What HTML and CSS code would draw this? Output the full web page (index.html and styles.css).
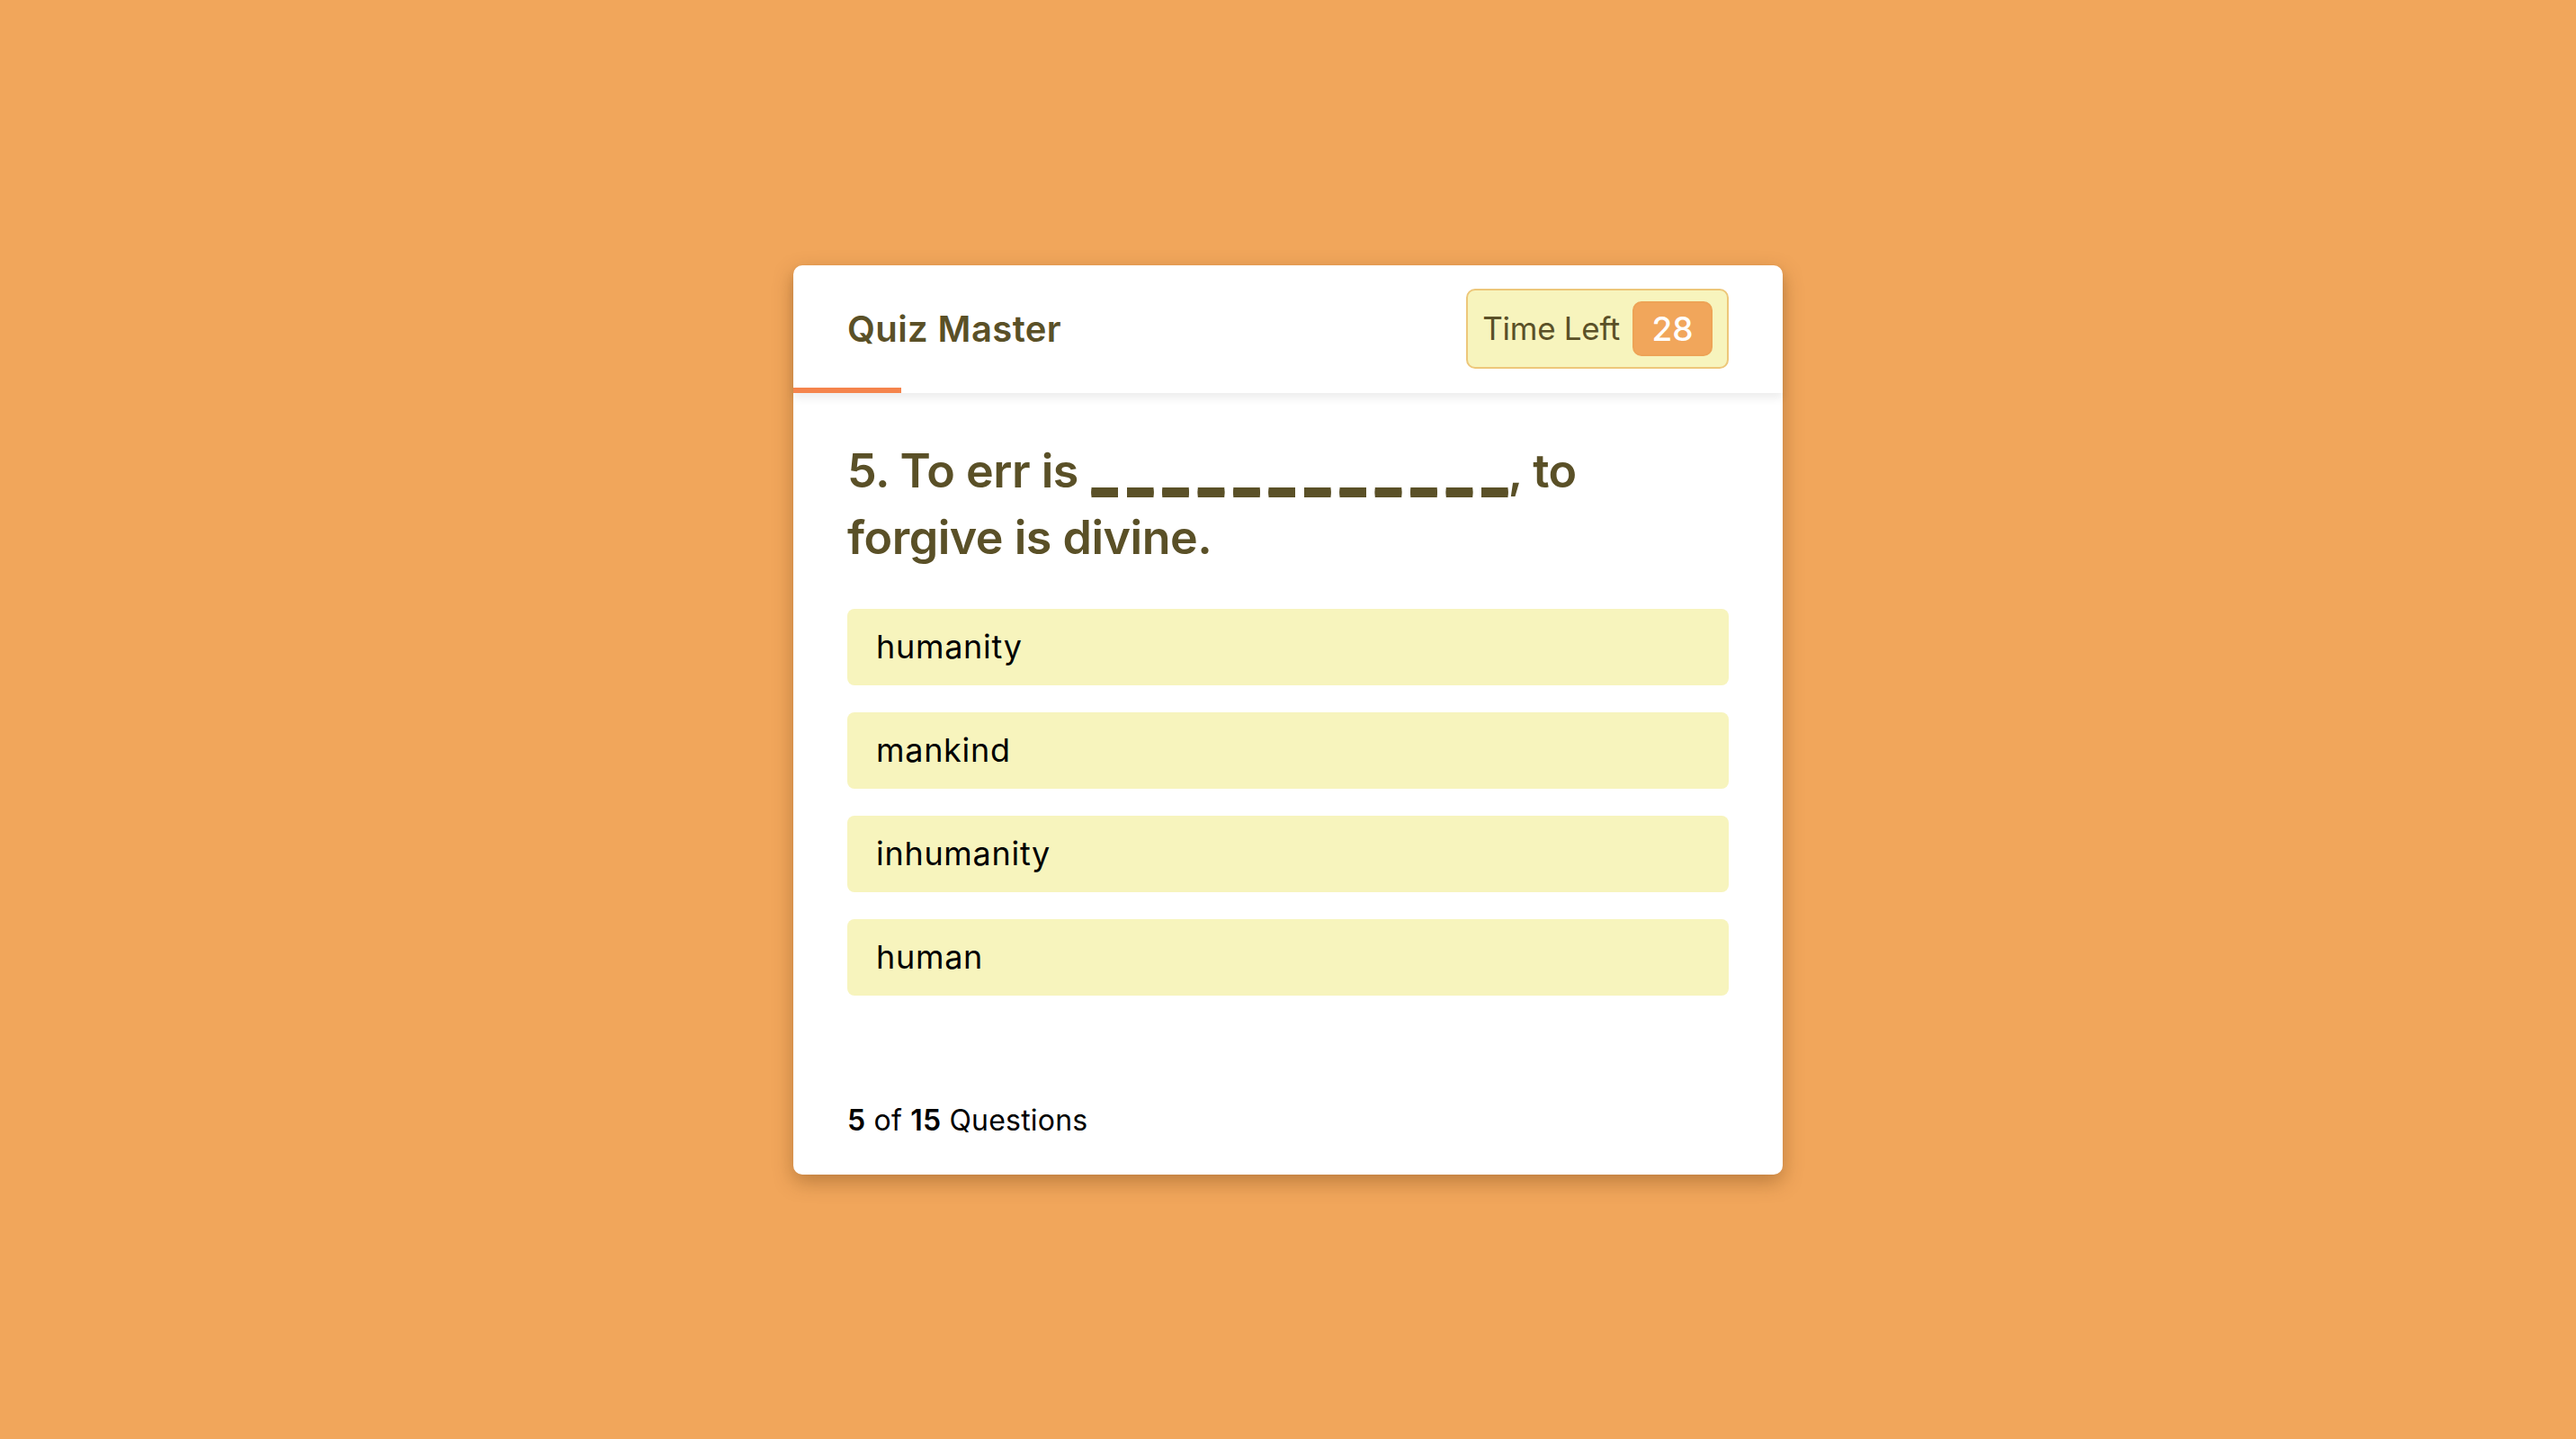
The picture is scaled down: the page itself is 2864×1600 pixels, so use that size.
FILE: index.html
```html
<!DOCTYPE html>
<html lang="en">
<head>
<meta charset="utf-8">
<title>Quiz Master</title>
<link rel="stylesheet" href="styles.css">
</head>
<body>
<div class="quiz-box">
  <header class="quiz-header">
    <div class="header-row">
      <div class="title">Quiz Master</div>
      <div class="timer">
        <span class="time-label">Time Left</span>
        <span class="time-sec">28</span>
      </div>
    </div>
    <div class="time-line"></div>
  </header>
  <section class="quiz-section">
    <div class="question">5. To err is <span class="blank"><span class="blank-spaced">___________</span>_</span>, to forgive is divine.</div>
    <div class="option-list">
      <div class="option">humanity</div>
      <div class="option">mankind</div>
      <div class="option">inhumanity</div>
      <div class="option">human</div>
    </div>
  </section>
  <footer class="quiz-footer">
    <span class="total"><b>5</b> of <b>15</b> Questions</span>
  </footer>
</div>
</body>
</html>
```

FILE: styles.css
```css
* {
  box-sizing: border-box;
  margin: 0;
  padding: 0;
}

html, body {
  height: 100%;
}

body {
  background: #f1a65b;
  font-family: Inter, "Noto Sans", sans-serif;
  display: flex;
  align-items: center;
  justify-content: center;
}

.quiz-box {
  width: 1100px;
  background: #ffffff;
  border-radius: 10px;
  box-shadow: 0 8px 22px rgba(90, 50, 10, 0.35);
}

.quiz-header {
  display: flex;
  flex-direction: column;
  box-shadow: 0 6px 10px rgba(0, 0, 0, 0.07);
  border-radius: 10px 10px 0 0;
}

.header-row {
  height: 136px;
  padding: 5px 60px 0;
  display: flex;
  align-items: center;
  justify-content: space-between;
}

.title {
  font-size: 40px;
  font-weight: 600;
  color: #5a5027;
  letter-spacing: 0.4px;
}

.timer {
  display: flex;
  align-items: center;
  gap: 14px;
  height: 89px;
  padding: 0 16px;
  background: #f7f4bd;
  border: 2px solid #edc77a;
  border-radius: 10px;
}

.time-label {
  font-size: 35px;
  font-weight: 400;
  color: #5a5027;
  letter-spacing: -0.3px;
}

.time-sec {
  width: 89px;
  height: 61px;
  display: flex;
  align-items: center;
  justify-content: center;
  background: #f1a65b;
  border: 2px solid #eea356;
  border-radius: 10px;
  color: #ffffff;
  font-size: 37px;
  font-weight: 500;
}

.time-line {
  width: 120px;
  height: 6px;
  background: #f5844c;
}

.quiz-section {
  padding: 50px 60px 79px;
}

.question {
  font-size: 52px;
  line-height: 74px;
  font-weight: 600;
  color: #5a5027;
  letter-spacing: -0.5px;
  margin-bottom: 42px;
}

.blank {
  font-size: 62px;
  line-height: 1;
  font-weight: 700;
  letter-spacing: 0;
  margin-left: 2px;
  text-shadow: 0 2px 0 #5a5027, 0 4px 0 #5a5027;
}

.blank-spaced {
  letter-spacing: 9.9px;
}

.option-list {
  display: flex;
  flex-direction: column;
  gap: 30px;
}

.option {
  height: 85px;
  display: flex;
  align-items: center;
  padding: 0 32px;
  background: #f7f4bd;
  border-radius: 8px;
  font-size: 36px;
  color: #000000;
  letter-spacing: 0.7px;
}

.quiz-footer {
  height: 120px;
  padding: 0 60px;
  display: flex;
  align-items: center;
}

.total {
  font-size: 32px;
  color: #000000;
  letter-spacing: 0.2px;
}

.total b {
  font-weight: 600;
}
```
